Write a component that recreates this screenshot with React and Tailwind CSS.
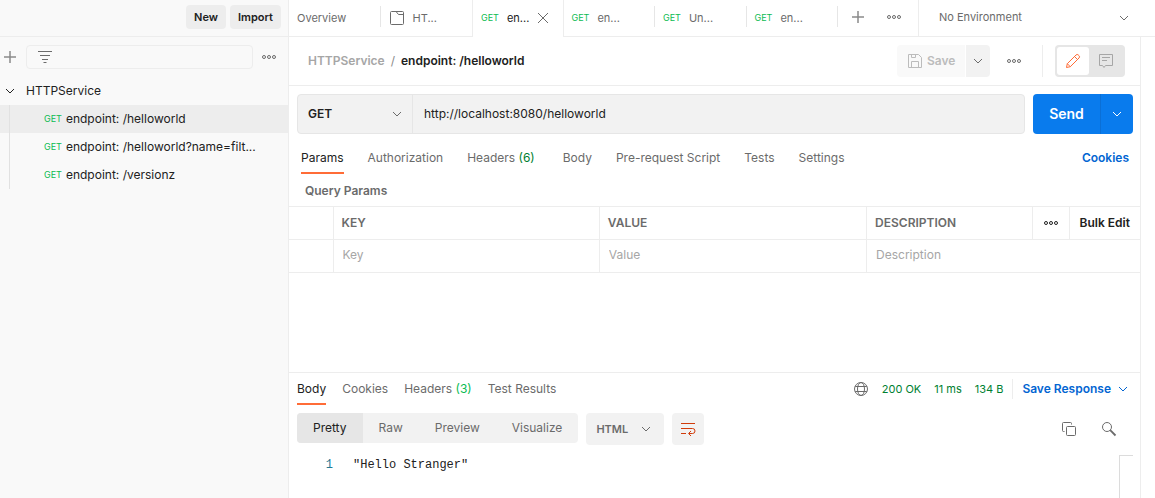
import React from "react";

function Icon({ size = 16, className = "", children }) {
  return (
    <svg
      width={size}
      height={size}
      viewBox={`0 0 ${size} ${size}`}
      fill="none"
      stroke="currentColor"
      aria-hidden="true"
      className={`pointer-events-none block shrink-0 ${className}`}
    >
      {children}
    </svg>
  );
}

const Chevron = ({ className = "" }) => (
  <Icon size={12} className={className}>
    <path d="M2 4l4 4 4-4" />
  </Icon>
);

const Plus = ({ className = "" }) => (
  <Icon size={12} className={className}>
    <path d="M6 0v12M0 6h12" strokeWidth="1.5" />
  </Icon>
);

const Dots = ({ className = "" }) => (
  <Icon size={16} className={className}>
    <circle cx="3" cy="8" r="1.5" />
    <circle cx="8" cy="8" r="1.5" />
    <circle cx="13" cy="8" r="1.5" />
  </Icon>
);

const Filter = () => (
  <Icon className="text-[#6b6b6b]">
    <path d="M1 2.5h14M3 6.5h10M5 10.5h6M6.500 13.500h3" />
  </Icon>
);

const Folder = () => (
  <Icon className="text-[#6b6b6b]">
    <path d="M1.500 2.500a1 1 0 0 1 1-1h4.500l2.500 3h5v9a1 1 0 0 1-1 1h-11a1 1 0 0 1-1-1zM7 1.500h6.500a1 1 0 0 1 1 1v2.500" />
  </Icon>
);

const Close = () => (
  <Icon size={12}>
    <path d="M1 1l10 10M11 1L1 11" />
  </Icon>
);

const Floppy = () => (
  <Icon>
    <path d="M1.500 1.500h10l3 3v10h-13zM4.500 14.500v-6h7v6M4.500 1.500v3h4v-3" />
  </Icon>
);

const Pencil = () => (
  <Icon>
    <path d="M1.500 14.500l.8-3.800 8.700-8.700a1.600 1.600 0 0 1 2.300 0l.7.7a1.600 1.600 0 0 1 0 2.300l-8.700 8.700zM9.500 3.500l3 3M2.300 10.700l3 3" />
  </Icon>
);

const Comment = () => (
  <Icon>
    <path d="M1.500 1.500h13v11h-7l-1.500 2-1.500-2h-3zM4 4.500h8M4 7.500h5" />
  </Icon>
);

const Globe = () => (
  <Icon className="text-[#6b6b6b]">
    <circle cx="8" cy="8" r="6.500" />
    <ellipse cx="8" cy="8" rx="3.500" ry="6.500" />
    <path d="M2.200 5.500h11.600M2.200 10.500h11.600" />
  </Icon>
);

const Wrap = () => (
  <Icon>
    <path d="M1 2.500h14M1 7.500h11.500a2.500 2.500 0 0 1 0 5H9M1 12.500h5M11 10l-2.500 2.500L11 15" />
  </Icon>
);

const Copy = () => (
  <Icon>
    <rect x="5.500" y="5.500" width="9" height="9" rx="1" />
    <path d="M3.500 10.500h-1a1 1 0 0 1-1-1v-7a1 1 0 0 1 1-1h7a1 1 0 0 1 1 1v1" />
  </Icon>
);

const Search = () => (
  <Icon>
    <circle cx="6" cy="6" r="4.500" />
    <path d="M9.200 9.200L14.500 14.500" strokeWidth="1.800" />
  </Icon>
);

const Method = () => <span className="text-[9px] text-[#0cbb52]">GET</span>;

function SideItem({ label, selected }) {
  return (
    <li className={`flex h-7 pl-[9px] ${selected ? "bg-[#ededed]" : ""}`}>
      <span className="w-px bg-[#e1e1e1]" />
      <a href="#request" className="flex min-w-0 items-center gap-1 pl-[34px]">
        <Method />
        <span className="truncate">{label}</span>
      </a>
    </li>
  );
}

function Sidebar() {
  return (
    <aside className="flex w-[289px] shrink-0 flex-col border-r border-[#ededed] bg-[#f9f9f9]">
      <div className="flex h-[37px] items-start justify-end gap-1 border-b border-[#ededed] pt-[5px] pr-[7px]">
        <button className="h-6 rounded bg-[#ededed] px-2 text-[11px] font-semibold">New</button>
        <button className="h-6 rounded bg-[#ededed] px-2 text-[11px] font-semibold">Import</button>
      </div>
      <div className="mt-2 flex h-6 items-center pl-1 text-[#6b6b6b]">
        <button aria-label="Create new">
          <Plus className="text-[#8a8a8a]" />
        </button>
        <label className="ml-[10px] flex h-6 min-w-0 flex-1 items-center gap-2 rounded-sm border border-[#ededed] pl-[10px]">
          <Filter />
          <input aria-label="Filter collections" className="min-w-0 flex-1 bg-transparent outline-none" />
        </label>
        <button aria-label="More options" className="mr-[3px] px-2">
          <Dots />
        </button>
      </div>
      <button className="mt-2 flex h-7 items-center gap-[10px] pl-1 text-left">
        <Chevron />
        HTTPService
      </button>
      <ul>
        <SideItem label="endpoint: /helloworld" selected />
        <SideItem label="endpoint: /helloworld?name=filt..." />
        <SideItem label="endpoint: /versionz" />
      </ul>
    </aside>
  );
}

function Tab({ children, divider = true }) {
  return (
    <div className="flex border-b border-[#ededed] pt-[6px]">
      <button className="flex h-6 min-w-0 flex-1 items-center pl-2 text-[11px] text-[#6b6b6b]">{children}</button>
      {divider && <span className="h-[21px] w-px bg-[#e6e6e6]" />}
    </div>
  );
}

function RequestTab({ label }) {
  return (
    <Tab>
      <Method />
      <span className="ml-2">{label}</span>
    </Tab>
  );
}

function TabBar() {
  return (
    <div className="flex h-[37px]">
      <div className="grid w-[549px] shrink-0 grid-cols-6">
        <Tab>Overview</Tab>
        <Tab divider={false}>
          <Folder />
          <span className="ml-2">HT...</span>
        </Tab>
        <div className="flex border-x border-[#ededed] pt-[6px]">
          <button className="flex h-6 items-center pl-2 text-[11px]">
            <Method />
            <span className="ml-2">en...</span>
          </button>
          <button aria-label="Close tab" className="ml-2 h-6 text-[#6b6b6b]">
            <Close />
          </button>
        </div>
        <RequestTab label="en..." />
        <RequestTab label="Un..." />
        <RequestTab label="en..." />
      </div>
      <div className="flex min-w-0 flex-1 border-b border-[#ededed]">
        <div className="flex w-[81px] shrink-0 items-center gap-[22px] border-r border-[#ededed] pb-[2px] pl-[14px] text-[#6b6b6b]">
          <button aria-label="New tab">
            <Plus className="text-[#8a8a8a]" />
          </button>
          <button aria-label="Tab options">
            <Dots />
          </button>
        </div>
        <div className="relative flex min-w-0 flex-1 items-center pb-px text-[11px] text-[#6b6b6b]">
          <select aria-label="Environment" className="w-full appearance-none bg-transparent pl-5 outline-none">
            <option>No Environment</option>
          </select>
          <Chevron className="absolute right-[25px]" />
        </div>
      </div>
    </div>
  );
}

function RequestHeader() {
  return (
    <div className="flex h-[49px] items-center border-b border-[#ededed] pr-[15px] pl-[19px] font-semibold">
      <a href="#collection" className="text-[#a6a6a6]">HTTPService</a>
      <span className="px-[6px] font-normal text-[#8a8a8a]">/</span>
      <h1 className="flex-1">endpoint: /helloworld</h1>
      <button disabled className="flex h-8 w-[68px] items-center gap-1 rounded-l bg-[#f9f9f9] pl-[10px] text-[#bcbcbc]">
        <Floppy />
        Save
      </button>
      <button aria-label="Save options" className="ml-px flex h-8 w-6 items-center justify-center rounded-r bg-[#f2f2f2] text-[#6b6b6b]">
        <Chevron />
      </button>
      <button aria-label="More actions" className="mx-4 text-[#6b6b6b]">
        <Dots />
      </button>
      <span className="mr-3 ml-1 h-8 w-px bg-[#ededed]" />
      <div className="flex h-8 w-[70px] items-center rounded bg-[#e6e6e6] p-[2px]">
        <button aria-label="Edit" className="flex h-7 w-8 items-center justify-center rounded-[3px] bg-white text-[#ff6c37]">
          <Pencil />
        </button>
        <button aria-label="Comments" className="flex h-7 flex-1 items-center justify-center text-[#a6a6a6]">
          <Comment />
        </button>
      </div>
    </div>
  );
}

function UrlRow() {
  return (
    <div className="flex h-10 gap-2 pr-[7px] pl-2">
      <div className="flex min-w-0 flex-1 rounded border border-[#e6e6e6] bg-[#f2f2f2]">
        <div className="relative flex w-[115px] shrink-0 items-center border-r border-[#e6e6e6]">
          <select aria-label="Method" className="h-full w-full appearance-none bg-transparent pl-[10px] font-semibold outline-none">
            <option>GET</option>
          </select>
          <Chevron className="absolute right-[9px] text-[#6b6b6b]" />
        </div>
        <input aria-label="Request URL" defaultValue="http://localhost:8080/helloworld" className="min-w-0 flex-1 bg-transparent pl-[11px] outline-none" />
      </div>
      <div className="flex w-[100px] shrink-0 overflow-hidden rounded bg-[#097bed] text-white">
        <button className="flex-1 border-r border-[#0a6fd6] text-sm font-semibold">Send</button>
        <button aria-label="Send options" className="flex w-8 items-center justify-center">
          <Chevron />
        </button>
      </div>
    </div>
  );
}

function LineTab({ children, active }) {
  return (
    <button
      className={`h-8 border-b-2 pt-[2px] whitespace-nowrap ${active ? "border-[#ff6c37] text-[#212121]" : "border-transparent text-[#6b6b6b]"}`}
    >
      {children}
    </button>
  );
}

const cell = "h-[33px] border-y border-l border-[#ededed] first:border-l-0";

function ParamsTable() {
  return (
    <table className="w-full table-fixed border-collapse text-left">
      <colgroup>
        <col className="w-11" />
        <col className="w-[31.3%]" />
        <col className="w-[31.4%]" />
        <col />
        <col className="w-[37px]" />
        <col className="w-[71px]" />
      </colgroup>
      <thead className="text-[#6b6b6b]">
        <tr>
          <td className={cell} />
          <th className={`${cell} pl-2 font-semibold`}>KEY</th>
          <th className={`${cell} pl-2 font-semibold`}>VALUE</th>
          <th className={`${cell} pl-2 font-semibold`}>DESCRIPTION</th>
          <td className={cell}>
            <button aria-label="Column options" className="mx-auto block text-[#212121]">
              <Dots />
            </button>
          </td>
          <td className={cell}>
            <button className="block w-full text-center font-semibold whitespace-nowrap text-[#212121]">Bulk Edit</button>
          </td>
        </tr>
      </thead>
      <tbody>
        <tr>
          <td className={cell} />
          <td className={cell}>
            <input aria-label="Key" placeholder="Key" className="block w-full pb-[2px] pl-[9px] outline-none placeholder:text-[#a6a6a6]" />
          </td>
          <td className={cell}>
            <input aria-label="Value" placeholder="Value" className="block w-full pb-[2px] pl-[9px] outline-none placeholder:text-[#a6a6a6]" />
          </td>
          <td colSpan={3} className={cell}>
            <input aria-label="Description" placeholder="Description" className="block w-full pb-[2px] pl-[9px] outline-none placeholder:text-[#a6a6a6]" />
          </td>
        </tr>
      </tbody>
    </table>
  );
}

function Response() {
  return (
    <section className="flex min-h-[126px] flex-col border-t border-[#ededed]">
      <div className="flex items-start">
        <div className="flex flex-1 gap-4 pl-2">
          <LineTab active>Body</LineTab>
          <LineTab>Cookies</LineTab>
          <LineTab>
            Headers <span className="text-[#0cbb52]">(3)</span>
          </LineTab>
          <LineTab>Test Results</LineTab>
        </div>
        <div className="flex h-8 items-center gap-[13px] text-[11px] text-[#007f31]">
          <Globe />
          <span>200 OK</span>
          <span>11 ms</span>
          <span>134 B</span>
        </div>
        <button className="mt-[6px] mr-[11px] ml-[9px] flex h-5 items-center gap-[6px] border-l border-[#ededed] pl-[9px] font-semibold text-[#0265d2]">
          Save Response
          <Chevron />
        </button>
      </div>
      <div className="mt-2 flex items-start gap-2 pl-2">
        <div className="flex h-[30px] overflow-hidden rounded bg-[#f2f2f2] text-[#6b6b6b]">
          <button className="bg-[#e6e6e6] px-4 text-[#212121]">Pretty</button>
          <button className="px-4">Raw</button>
          <button className="px-4">Preview</button>
          <button className="px-4">Visualize</button>
        </div>
        <div className="relative flex h-8 w-[78px] items-center rounded bg-[#f2f2f2] text-[11px] text-[#6b6b6b]">
          <select aria-label="Response format" className="h-full w-full appearance-none bg-transparent pl-[10px] font-semibold outline-none">
            <option>HTML</option>
          </select>
          <Chevron className="absolute right-3" />
        </div>
        <button aria-label="Wrap lines" className="flex h-8 w-8 items-center justify-center rounded bg-[#f2f2f2] text-[#d13c0b]">
          <Wrap />
        </button>
        <div className="flex h-8 flex-1 items-center justify-end gap-6 pr-[23px] text-[#6b6b6b]">
          <button aria-label="Copy response">
            <Copy />
          </button>
          <button aria-label="Search response">
            <Search />
          </button>
        </div>
      </div>
      <div className="mt-[10px] flex flex-1 pr-[7px] font-['Liberation_Mono',monospace] text-xs">
        <span className="w-11 text-right leading-5 text-[#237893]">1</span>
        <code className="flex-1 pl-5 font-['Liberation_Mono',monospace] leading-5">"Hello Stranger"</code>
        <span className="w-[14px] border-t border-l border-[#dcdcdc]" />
      </div>
    </section>
  );
}

export default function App() {
  return (
    <div className="flex min-h-screen bg-white font-['Inter',sans-serif] text-xs text-[#212121]">
      <Sidebar />
      <main className="flex min-w-0 flex-1 flex-col">
        <TabBar />
        <div className="flex flex-1">
          <div className="flex min-w-0 flex-1 flex-col">
            <RequestHeader />
            <div className="mt-2">
              <UrlRow />
            </div>
            <div className="mt-2 flex gap-6 pr-[11px] pl-3">
              <LineTab active>Params</LineTab>
              <LineTab>Authorization</LineTab>
              <LineTab>
                Headers <span className="mr-1 text-[#007f31]">(6)</span>
              </LineTab>
              <LineTab>Body</LineTab>
              <LineTab>Pre-request Script</LineTab>
              <LineTab>Tests</LineTab>
              <LineTab>Settings</LineTab>
              <a href="#cookies" className="ml-auto leading-8 font-semibold text-[#0265d2]">Cookies</a>
            </div>
            <h2 className="flex h-8 items-center pt-[2px] pl-4 font-semibold text-[#6b6b6b]">Query Params</h2>
            <ParamsTable />
            <div className="flex-1" />
            <Response />
          </div>
          <div className="w-[15px] shrink-0 border-l border-[#ededed]" />
        </div>
      </main>
    </div>
  );
}
